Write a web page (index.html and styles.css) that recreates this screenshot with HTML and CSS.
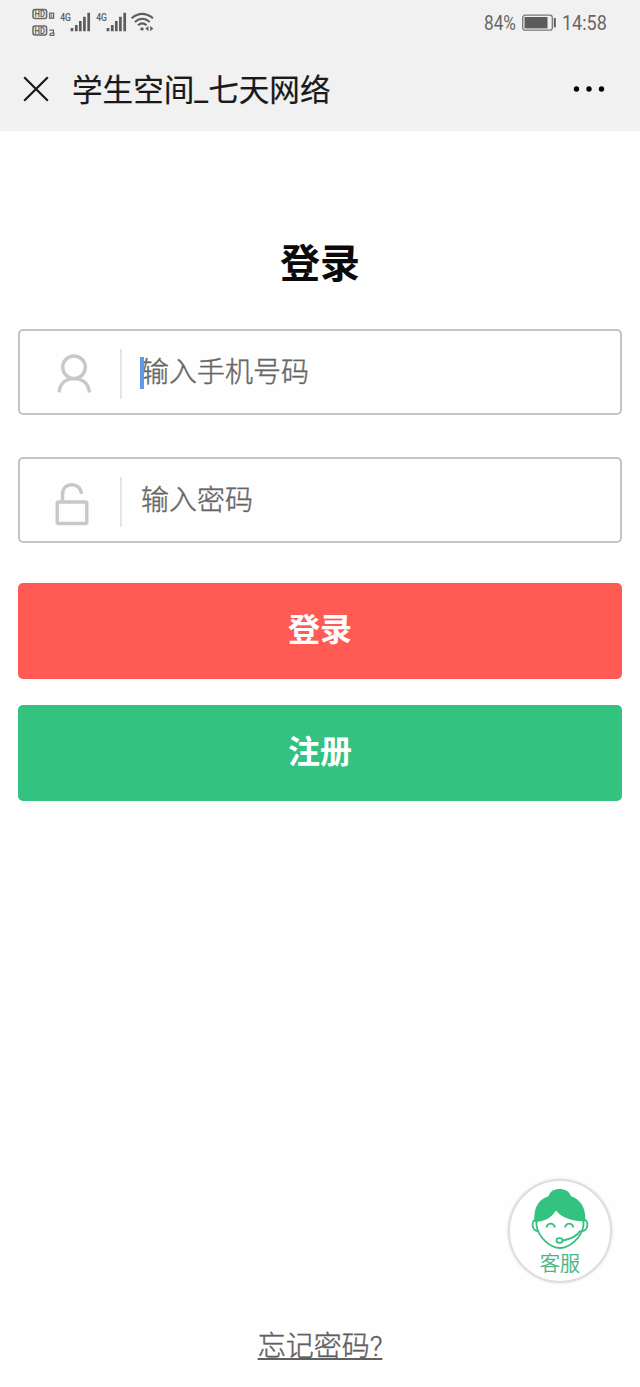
FILE: index.html
```html
<!DOCTYPE html>
<html lang="zh-CN">
<head>
<meta charset="utf-8">
<title>学生空间_七天网络</title>
<link rel="stylesheet" href="styles.css">
</head>
<body>
<div class="screen">
  <header class="top">
    <div class="status">
      <svg class="signals" width="124" height="32" viewBox="32 6 124 32">
        <rect x="33" y="9.6" width="13.6" height="9" rx="2" fill="none" stroke="#666" stroke-width="1.5"/>
        <text class="tiny-bold" x="34.6" y="17.1" textLength="10.4" lengthAdjust="spacingAndGlyphs">HD</text>
        <rect x="33" y="26" width="13.6" height="9" rx="2" fill="none" stroke="#666" stroke-width="1.5"/>
        <text class="tiny-bold" x="34.6" y="33.5" textLength="10.4" lengthAdjust="spacingAndGlyphs">HD</text>
        <rect x="49.6" y="13.2" width="4" height="5" fill="none" stroke="#666" stroke-width="1.3"/>
        <path d="M51.6 14.5v3" stroke="#666"/>
        <path d="M49.4 30.2h4v2.4l-3.4 1.2v1.5h3.8v-3" fill="none" stroke="#666" stroke-width="1.2"/>
        <text class="net" x="60.2" y="21" textLength="10.8" lengthAdjust="spacingAndGlyphs">4G</text>
        <path d="M72 28v3.3M76.3 25v6.3M80.3 21v10.3M84.4 16.8v14.5M88.7 12.8v18.5" stroke="#5c5c5c" stroke-width="2.7"/>
        <text class="net" x="96.2" y="21" textLength="10.8" lengthAdjust="spacingAndGlyphs">4G</text>
        <path d="M108 28v3.3M112.3 25v6.3M116.3 21v10.3M120.4 16.8v14.5M124.7 12.8v18.5" stroke="#5c5c5c" stroke-width="2.7"/>
        <path d="M131.6 18.2q10.6-8.6 21.4 0M134.8 21.9q7.5-6.2 15 0M138 25.2q4.3-3.6 8.6 0" fill="none" stroke="#5c5c5c" stroke-width="2"/>
        <circle cx="142" cy="28.9" r="1.7" fill="#5c5c5c"/>
        <path d="M145.3 28.6l3.2-2.6v5.2zM153.4 28.6l-3.2-2.6v5.2z" fill="#5c5c5c"/>
      </svg>
      <div class="power">
        <span class="percent">84%</span>
        <svg width="34" height="18" viewBox="0 0 34 18">
          <rect x="0.7" y="1.2" width="29.6" height="15" rx="2.5" fill="none" stroke="#777" stroke-width="1.3"/>
          <rect x="2.5" y="3" width="23" height="11.4" fill="#5c5c5c"/>
          <path d="M32.8 4v9.4" stroke="#5c5c5c" stroke-width="2"/>
        </svg>
        <span class="clock">14:58</span>
      </div>
    </div>
    <div class="titlebar">
      <svg width="26" height="26" viewBox="0 0 26 26"><path d="M1.2 1.2l23.6 23.6M24.8 1.2L1.2 24.8" stroke="#191919" stroke-width="2.2"/></svg>
      <h1 class="title">学生空间_七天网络</h1>
      <svg class="more" width="32" height="8" viewBox="0 0 32 8"><circle cx="3.5" cy="4" r="2.7"/><circle cx="16" cy="4" r="2.7"/><circle cx="28.5" cy="4" r="2.7"/></svg>
    </div>
  </header>
  <main class="login">
    <h2 class="heading">登录</h2>
    <div class="field">
      <svg class="icon" width="38" height="42" viewBox="0 0 38 42">
        <g fill="none" stroke="#c8c8c8" stroke-width="3.4"><circle cx="19" cy="14.3" r="11.3"/><path d="M4 39.4C5 30 11 25.6 19 25.6S33 30 34.5 39.4"/></g>
      </svg>
      <span class="divider"></span>
      <span class="placeholder">输入手机号码<i class="caret"></i></span>
    </div>
    <div class="field">
      <svg class="icon lock" width="38" height="44" viewBox="0 0 38 44">
        <g fill="none" stroke="#c8c8c8" stroke-width="3.4"><rect x="2.2" y="20" width="29.6" height="21.5" rx="1.5"/><path d="M7.5 20V12.5C7.5 6 11.500 2.7 17 2.7c5 0 8.5 3 9.7 9.3"/></g>
      </svg>
      <span class="divider"></span>
      <span class="placeholder">输入密码</span>
    </div>
    <button class="button sign-in">登录</button>
    <button class="button register">注册</button>
  </main>
  <footer class="footer">
    <div class="service">
      <svg width="58" height="62" viewBox="0 0 58 62">
        <g fill="none" stroke="#35bf80" stroke-width="1.8">
          <path d="M5.5 30v7C7 50 20 60 29 60S51 50 52.500 37v-7"/>
          <path d="M5.5 31.500C-.5 31.500.5 44 7.500 43M52.500 31.500c6 0 5 12.500-2 11.500"/>
          <path d="M15.500 39.500c1.200-5.200 7.200-5.200 8.400 0M34 39.500c1.200-5.200 7.200-5.200 8.400 0"/>
          <ellipse cx="28.500" cy="52.500" rx="3" ry="2.300"/>
          <path d="M31.700 52.500C40 51 46 48.500 49.500 42.500"/>
        </g>
        <path d="M3.500 34C2 20 8 11 17.500 8.300 19.500-1.500 37.500-1.500 40 8.300 50 11.500 55.500 21 54 33.500 42 33.500 31 30 25 22.500 21 29 14 34 3.500 34Z" fill="#34c281"/>
      </svg>
      <span class="service-label">客服</span>
    </div>
    <a class="forgot">忘记密码?</a>
  </footer>
</div>
</body>
</html>
```
FILE: styles.css
```css
* { box-sizing: border-box; }
body {
  margin: 0;
  background: #fefefe;
  font-family: Roboto, "Noto Sans CJK SC", sans-serif;
}
.screen { display: flex; flex-direction: column; height: 1387px; overflow: hidden; }
.top { height: 131px; background: #f1f1f1; }
.status {
  display: flex;
  justify-content: space-between;
  height: 46px;
  padding: 6px 33px 0 32px;
}
.tiny-bold { font-size: 8.5px; font-weight: 700; fill: #666; }
.net { font-size: 11.5px; font-weight: 500; fill: #5c5c5c; }
.power {
  display: flex;
  align-items: center;
  height: 33px;
  color: #666;
  font-size: 20px;
}
.percent { width: 38px; transform: scaleX(.86); transform-origin: left; white-space: nowrap; }
.clock { width: 45px; margin-left: 6px; transform: scaleX(.9); transform-origin: left; white-space: nowrap; }
.titlebar { display: flex; align-items: center; height: 84px; padding: 1px 35px 0 23px; }
.title {
  margin: 4px 0 0 23px;
  color: #191919;
  font-size: 30.6px;
  font-weight: 400;
  line-height: 44px;
  -webkit-text-stroke: .2px #191919;
}
.more { margin: 1px 0 0 auto; fill: #000; }
.login { display: flex; flex-direction: column; padding: 104px 18px 0; }
.heading {
  margin: 0 0 34px;
  color: #0a0a0a;
  font-size: 40px;
  line-height: 60px;
  text-align: center;
}
.field {
  display: flex;
  align-items: center;
  height: 86px;
  margin-bottom: 42px;
  padding-left: 35px;
  border: 2px solid #c4c4c4;
  border-radius: 5px;
}
.icon { margin-top: 3px; }
.lock { margin-top: 7px; }
.divider { width: 2px; height: 50px; margin: 3px 19px 0 27px; background: #e5e5e5; }
.placeholder {
  position: relative;
  margin-top: 1px;
  color: #666;
  font-size: 28px;
  font-weight: 300;
  line-height: 40px;
  -webkit-text-stroke: .4px #666;
}
.caret { position: absolute; left: -1px; top: 4px; width: 4px; height: 32px; background: #5f9be8; }
.button {
  height: 96px;
  padding: 0 0 2px;
  border: 0;
  border-radius: 5px;
  color: #fff;
  font: 700 32px/48px Roboto, "Noto Sans CJK SC", sans-serif;
}
.sign-in { margin: -2px 0 26px; background: #ff5a54; }
.register { background: #34c281; }
.footer { display: flex; flex-direction: column; align-items: center; margin-top: auto; padding-bottom: 20px; }
.service {
  display: flex;
  flex-direction: column;
  align-items: center;
  align-self: flex-end;
  width: 104px;
  height: 104px;
  margin: 0 28px 44px 0;
  padding-top: 7px;
  border: 2px solid #dedede;
  border-radius: 50%;
  background: #fff;
  box-shadow: 0 0 3px #ddd;
}
.service-label {
  margin-top: 2px;
  color: #43b583;
  font-size: 20px;
  font-weight: 300;
  line-height: 24px;
  -webkit-text-stroke: .4px #43b583;
}
.forgot {
  color: #606060;
  font-size: 28px;
  font-weight: 300;
  line-height: 40px;
  text-decoration: underline;
  text-decoration-thickness: 2px;
  text-underline-offset: 2px;
  text-decoration-skip-ink: none;
  -webkit-text-stroke: .4px #606060;
}
```
